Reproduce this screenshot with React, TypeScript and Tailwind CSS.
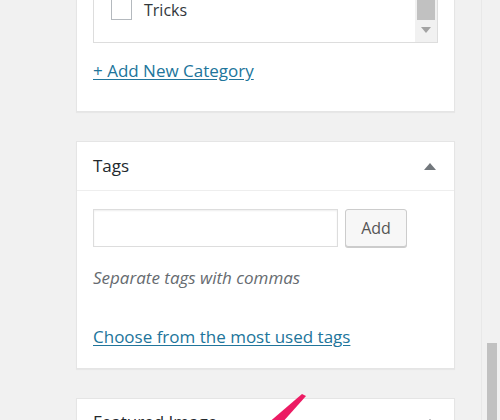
import React from "react";

function Card({ children, className = "" }: { children: React.ReactNode; className?: string }) {
  return (
    <div className={`w-[379px] bg-white border border-[#e5e5e5] shadow-[0_1px_1px_rgba(0,0,0,0.04)] ${className}`}>
      {children}
    </div>
  );
}

export default function App() {
  return (
    <div
      className="relative w-[500px] h-[420px] overflow-hidden bg-[#f1f1f1] text-[#23282d]"
      style={{ fontFamily: '"Open Sans", "Noto Sans", sans-serif' }}
    >
      <div className="flex flex-col pl-[76px]">
        {/* Categories (cut off at top) */}
        <Card className="mt-[-40px] h-[152px] px-[16px]">
          <div className="mt-[20px] h-[62px] border border-[#dddddd] flex">
            <div className="flex-1 pl-[17px] pt-[15px] flex items-center gap-[12px] self-start">
              <span className="w-[21px] h-[21px] border border-[#b4b9be] bg-white shrink-0" />
              <span className="text-[16px] leading-[22px] text-[#32373c] mt-[2px]">Tricks</span>
            </div>
            <div className="w-[22px] bg-[#f1f1f1] flex flex-col items-center">
              <div className="w-[18px] h-[30px] bg-[#c1c1c1] mt-[8px]" />
              <svg width="10" height="6" viewBox="0 0 10 6" className="mt-[7px]">
                <path d="M0 0h10L5 6z" fill="#a3a3a3" />
              </svg>
            </div>
          </div>
          <a className="block mt-[17px] text-[17px] leading-[22px] text-[#21759b] underline underline-offset-2">
            + Add New Category
          </a>
        </Card>

        {/* Tags */}
        <Card className="mt-[29px] h-[228px]">
          <div className="h-[49px] border-b border-[#eeeeee] flex items-center justify-between pl-[16px] pr-[18px]">
            <h2 className="text-[17px] leading-[22px] font-normal text-[#23282d]">Tags</h2>
            <svg width="12" height="7" viewBox="0 0 12 7">
              <path d="M0 7L6 0l6 7z" fill="#72777c" />
            </svg>
          </div>
          <div className="px-[16px] pt-[18px]">
            <div className="flex gap-[7px]">
              <input
                type="text"
                className="w-[245px] h-[38px] border border-[#dddddd] bg-white shadow-[inset_0_1px_2px_rgba(0,0,0,0.07)] outline-none"
              />
              <button className="w-[62px] h-[38px] bg-[#f7f7f7] border border-[#cccccc] rounded-[3px] shadow-[0_1px_0_#cccccc] text-[16px] text-[#555555]">
                Add
              </button>
            </div>
            <p className="mt-[20px] text-[17px] leading-[22px] italic text-[#666b70]">Separate tags with commas</p>
            <a className="block mt-[37px] text-[17px] leading-[22px] text-[#21759b] underline underline-offset-2">
              Choose from the most used tags
            </a>
          </div>
        </Card>

        {/* Featured Image */}
        <Card className="mt-[29px] h-[60px]">
          <div className="flex items-center justify-between pl-[16px] pr-[18px] pt-[12px]">
            <h2 className="text-[17px] leading-[22px] font-normal text-[#23282d]">Featured Image</h2>
            <svg width="12" height="7" viewBox="0 0 12 7">
              <path d="M0 7L6 0l6 7z" fill="#72777c" />
            </svg>
          </div>
        </Card>
      </div>

      {/* right edge / scrollbar */}
      <div className="absolute top-0 right-[18px] w-px h-full bg-[#e8e8e8]" />
      <div className="absolute top-[343px] left-[487px] w-[10px] h-[90px] bg-[#c1c1c1]" />

      {/* pink annotation arrow */}
      <svg className="absolute left-0 top-0" width="500" height="420" viewBox="0 0 500 420">
        <path d="M302 394 L306 396 L281 424 L267 424 Z" fill="#ec1b63" />
      </svg>
    </div>
  );
}
